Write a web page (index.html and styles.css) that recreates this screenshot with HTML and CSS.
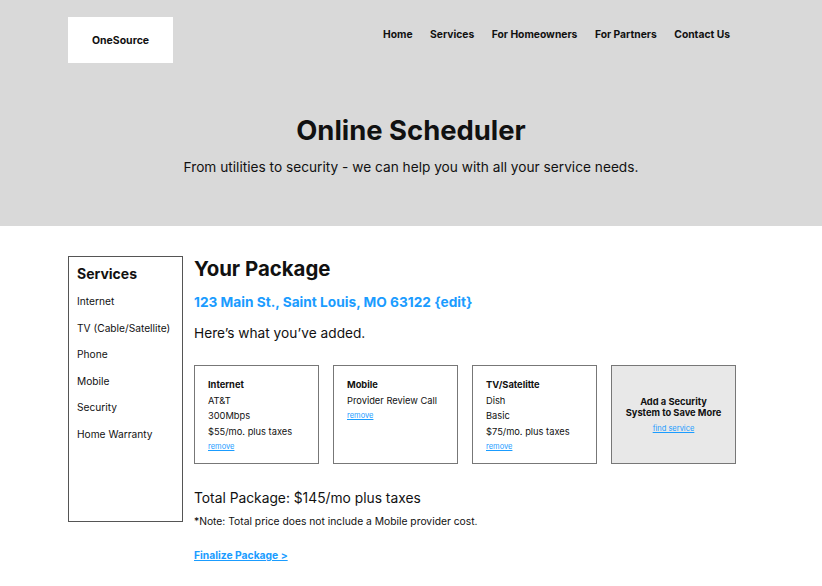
FILE: index.html
```html
<!DOCTYPE html>
<html lang="en">
  <head>
    <meta charset="UTF-8" />
    <meta name="viewport" content="width=device-width, initial-scale=1.0" />
    <title>Online Scheduler</title>
    <link rel="stylesheet" href="styles.css">
  </head>
  <body>
    <header class="hero">
      <div class="topbar">
        <div class="logo">OneSource</div>
        <nav class="nav">
          <a href="#">Home</a>
          <a href="#">Services</a>
          <a href="#">For Homeowners</a>
          <a href="#">For Partners</a>
          <a href="#">Contact Us</a>
        </nav>
      </div>
      <h1 class="title">Online Scheduler</h1>
      <p class="subtitle">From utilities to security - we can help you with all your service needs.</p>
    </header>

    <div class="content">
      <aside class="sidebar">
        <h3>Services</h3>
        <ul>
          <li>Internet</li>
          <li>TV (Cable/Satellite)</li>
          <li>Phone</li>
          <li>Mobile</li>
          <li>Security</li>
          <li>Home Warranty</li>
        </ul>
      </aside>

      <main class="package">
        <h2>Your Package</h2>
        <a class="address" href="#">123 Main St., Saint Louis, MO 63122 {edit}</a>
        <p class="intro">Here’s what you’ve added.</p>

        <div class="cards">
          <div class="card">
            <b>Internet</b>
            <span>AT&amp;T</span>
            <span>300Mbps</span>
            <span>$55/mo. plus taxes</span>
            <a href="#">remove</a>
          </div>
          <div class="card">
            <b>Mobile</b>
            <span>Provider Review Call</span>
            <a href="#">remove</a>
          </div>
          <div class="card">
            <b>TV/Satelitte</b>
            <span>Dish</span>
            <span>Basic</span>
            <span>$75/mo. plus taxes</span>
            <a href="#">remove</a>
          </div>
          <div class="card add">
            <b>Add a Security<br>System to Save More</b>
            <a href="#">find service</a>
          </div>
        </div>

        <p class="total">Total Package: $145/mo plus taxes</p>
        <p class="note">*Note: Total price does not include a Mobile provider cost.</p>
        <a class="finalize" href="#">Finalize Package &gt;</a>
      </main>
    </div>
  </body>
</html>
```

FILE: styles.css
```css
* {
  box-sizing: border-box;
}

body {
  margin: 0;
  font-family: Inter, "Noto Sans", sans-serif;
  color: #111;
  background: white;
}

.hero {
  background: #d9d9d9;
  height: 226px;
  padding: 17px 68px 0;
}
.topbar {
  display: flex;
  justify-content: space-between;
}
.logo {
  width: 105px;
  height: 46px;
  background: white;
  display: flex;
  align-items: center;
  justify-content: center;
  font-size: 10.5px;
  font-weight: 700;
}
.nav {
  display: flex;
  gap: 17.5px;
  padding: 11px 24px 0 0;
  height: 36px;
}
.nav a {
  color: #111;
  text-decoration: none;
  font-size: 10.3px;
  font-weight: 700;
}
.title {
  margin: 50px 0 0;
  text-align: center;
  font-size: 27.4px;
  line-height: 34px;
}
.subtitle {
  margin: 12px 0 0;
  text-align: center;
  font-size: 13.7px;
}

.content {
  display: flex;
  gap: 11px;
  padding: 30px 68px 0;
}
.sidebar {
  width: 115px;
  height: 266px;
  border: 1px solid #555;
  padding: 8px 8px;
  flex-shrink: 0;
}
.sidebar h3 {
  margin: 0;
  font-size: 14px;
  line-height: 18px;
}
.sidebar ul {
  list-style: none;
  margin: 11px 0 0;
  padding: 0;
}
.sidebar li {
  font-size: 10.2px;
  line-height: 14px;
  margin-bottom: 12.5px;
  white-space: nowrap;
}

.package h2 {
  margin: 0;
  font-size: 20.4px;
  line-height: 26px;
}
.address {
  display: block;
  margin-top: 12px;
  color: #1a9cff;
  font-weight: 700;
  font-size: 13.7px;
  text-decoration: none;
}
.intro {
  margin: 15px 0 0;
  font-size: 13.7px;
}
.cards {
  display: flex;
  gap: 14px;
  margin-top: 24px;
}
.card {
  width: 125px;
  height: 99px;
  border: 1px solid #777;
  padding: 11px 13px;
  display: flex;
  flex-direction: column;
  font-size: 9.3px;
  line-height: 15.5px;
  white-space: nowrap;
}
.card a {
  color: #1a9cff;
  font-size: 7.5px;
  line-height: 15px;
}
.card.add {
  background: #e8e8e8;
  align-items: center;
  justify-content: center;
  text-align: center;
  padding-bottom: 8px;
  line-height: 11px;
}
.card.add a {
  margin-top: 3px;
}
.total {
  margin: 26px 0 0;
  font-size: 13.8px;
}
.note {
  margin: 9px 0 0;
  font-size: 10.3px;
}
.finalize {
  display: inline-block;
  margin-top: 22px;
  color: #1a9cff;
  font-size: 10.3px;
  font-weight: 700;
}
```
